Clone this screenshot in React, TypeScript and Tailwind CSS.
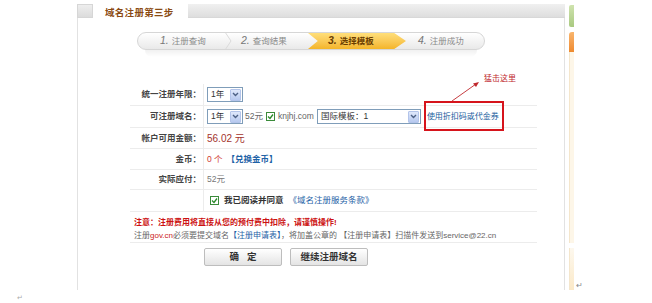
import React from 'react';

const FONT = "font-['Liberation_Sans','Noto_Sans_CJK_SC',sans-serif]";

function Select({ width, text }: { width: string; text: string }) {
  return (
    <span className={`inline-flex items-center h-[15px] ${width} border border-[#7f9db9] bg-white pl-[3px] pr-[1px]`}>
      <span className="flex-1 text-[8.5px] text-[#333] leading-none">{text}</span>
      <span className="w-[11px] h-[12px] rounded-[1px] bg-gradient-to-b from-[#dfe8fb] to-[#b7c9ef] border border-[#b3c4ea] flex items-center justify-center">
        <svg width="7" height="5" viewBox="0 0 7 5">
          <path d="M1 1 L3.5 3.5 L6 1" fill="none" stroke="#4d6185" strokeWidth="1.4" />
        </svg>
      </span>
    </span>
  );
}

function Check() {
  return (
    <span className="inline-flex items-center justify-center w-[9px] h-[9px] border border-[#3b8b3b] bg-white">
      <svg width="7" height="7" viewBox="0 0 7 7">
        <path d="M1 3.5 L3 5.5 L6 1.5" fill="none" stroke="#2a8a2a" strokeWidth="1.3" />
      </svg>
    </span>
  );
}

function Row({ label, h, children, relative }: { label: string; h: string; children?: React.ReactNode; relative?: boolean }) {
  return (
    <div className={`flex ${h} border-b border-[#ececec] ${relative ? 'relative' : ''}`}>
      <div className="w-[74px] border-r border-[#ececec] flex items-center justify-end pr-[2px] text-[8.5px] font-bold text-[#444]">{label}</div>
      <div className="flex-1 flex items-center pl-[3px] gap-[2px]">{children}</div>
    </div>
  );
}

export default function App() {
  return (
    <div className={`w-[652px] h-[303px] bg-white overflow-hidden ${FONT}`}>
      <div className="flex pt-[4px] h-[290px]">
        <div className="w-[77px] shrink-0" />

        {/* main panel */}
        <div className="w-[488px] flex flex-col">
          <div className="flex h-[14px] items-start">
            <div className="w-[16px] h-[14px] bg-gradient-to-b from-[#eeeeee] to-[#dcdcdc] border border-[#d6d6d6]" />
            <div className="w-[95px] h-[18px] bg-white flex items-center pl-[12px] text-[9.5px] font-bold text-[#8a4a12] tracking-[0.3px]">域名注册第三步</div>
            <div className="flex-1 h-[14px] bg-gradient-to-b from-[#f0f0f0] to-[#dedede] border-b border-[#d8d8d8]" />
          </div>

          <div className="flex-1 border-l border-r border-[#e2e2e2] flex flex-col">
            {/* steps */}
            <div className="ml-[59px] mt-[14px] w-[348px]">
              <div className="h-[18px] rounded-full border border-[#d6d6d6] bg-gradient-to-b from-white to-[#e9e9e9] flex items-center overflow-hidden">
                <div className="w-[86px] flex items-center pl-[22px] text-[8.5px] text-[#8a8a8a]">
                  <span className="italic text-[10.5px] mr-[3px] text-[#777]">1.</span>注册查询
                </div>
                <svg width="8" height="18" viewBox="0 0 8 18" className="shrink-0">
                  <path d="M1 0 L7 9 L1 18" fill="none" stroke="#dadada" strokeWidth="1" />
                </svg>
                <div className="w-[76px] flex items-center pl-[9px] text-[8.5px] text-[#8a8a8a]">
                  <span className="italic text-[10.5px] mr-[3px] text-[#777]">2.</span>查询结果
                </div>
                <div className="w-[98px] h-full bg-gradient-to-b from-[#ffdf7a] to-[#f4b526] [clip-path:polygon(0_0,88%_0,100%_50%,88%_100%,0_100%,10%_50%)] flex items-center pl-[20px] text-[8.5px] font-bold text-[#6b3d00]">
                  <span className="italic text-[10.5px] mr-[3px]">3.</span>选择模板
                </div>
                <div className="flex-1 flex items-center pl-[12px] text-[8.5px] text-[#8a8a8a]">
                  <span className="italic text-[10.5px] mr-[3px] text-[#777]">4.</span>注册成功
                </div>
              </div>
              <div className="mx-[8px] h-[7px] rounded-b-full bg-gradient-to-b from-[#f1f1f1] to-white" />
            </div>

            {/* form table */}
            <div className="relative ml-[52px] mt-[27px] w-[407px]">
              <div className="absolute left-[354px] top-[-11px] text-[8px] text-[#c0282d]">猛击这里</div>
              <svg className="absolute left-[318px] top-[-5px]" width="36" height="26" viewBox="0 0 36 26">
                <line x1="4" y1="22" x2="28" y2="5" stroke="#c0282d" strokeWidth="0.9" />
                <path d="M31 3 L25 4.5 L28 8 Z" fill="#c0282d" />
              </svg>

              <Row label="统一注册年限：" h="h-[22px]">
                <Select width="w-[36px]" text="1年" />
              </Row>
              <Row label="可注册域名：" h="h-[22px]" relative>
                <Select width="w-[36px]" text="1年" />
                <span className="text-[8.5px] text-[#666] mr-[1px]">52元</span>
                <Check />
                <span className="text-[8.5px] text-[#666] ml-[1px]">knjhj.com</span>
                <Select width="w-[104px] ml-[1px]" text="国际模板：1" />
                <span className="ml-[4px] text-[8px] text-[#1a5e9e]">使用折扣码或代金券</span>
                <div className="absolute left-[294px] top-[-5px] w-[80px] h-[30px] border-2 border-[#d6141c]" />
              </Row>
              <Row label="帐户可用金额：" h="h-[21px]">
                <span className="text-[10px] text-[#a3332c]">56.02 元</span>
              </Row>
              <Row label="金币：" h="h-[21px]">
                <span className="text-[8.5px] text-[#d03a30]">0 个</span>
                <span className="ml-[2px] text-[8.5px] font-bold text-[#1e62a6]">【兑换金币】</span>
              </Row>
              <Row label="实际应付：" h="h-[20px]">
                <span className="text-[8.5px] text-[#777]">52元</span>
              </Row>
              <Row label="" h="h-[22px]">
                <span className="ml-[3px] mr-[3px] flex"><Check /></span>
                <span className="text-[8.5px] font-bold text-[#333]">我已阅读并同意</span>
                <span className="ml-[3px] text-[8.5px] text-[#1e62a6]">《域名注册服务条款》</span>
              </Row>

              <div className="h-[31px] border-b border-[#ececec] pl-[4px] pt-[3px] flex flex-col justify-center gap-[2px]">
                <div className="text-[8px] font-bold text-[#cc1111] leading-[11px]">注意：注册费用将直接从您的预付费中扣除，请谨慎操作!</div>
                <div className="text-[8px] text-[#666] leading-[11px]">
                  注册<span className="text-[#cc2222]">gov.cn</span>必须要提交域名<span className="text-[#1e62a6]">【注册申请表】</span>，将加盖公章的 【注册申请表】扫描件发送到service@22.cn
                </div>
              </div>

              <div className="flex gap-[8px] pl-[74px] pt-[5px]">
                <button className="w-[78px] h-[18px] rounded-[2px] border border-[#bdbdbd] bg-gradient-to-b from-white to-[#e4e4e4] text-[9.5px] font-bold text-[#333] tracking-[8px] pl-[8px]">确定</button>
                <button className="w-[78px] h-[18px] rounded-[2px] border border-[#bdbdbd] bg-gradient-to-b from-white to-[#e4e4e4] text-[9.5px] font-bold text-[#333]">继续注册域名</button>
              </div>
            </div>
          </div>
        </div>

        {/* right side strip */}
        <div className="ml-[4px] w-[5px] flex flex-col">
          <div className="mt-[1px] h-[22px] rounded-l-[2px] bg-gradient-to-b from-[#cfe3ae] to-[#a9c980]" />
          <div className="mt-[5px] h-[20px] rounded-tl-[3px] bg-gradient-to-b from-[#f9b56c] to-[#ee8a2e]" />
          <div className="h-[191px] bg-[#fdf6e8] border-l border-[#f4e6cc]" />
          <div className="mt-[5px] h-[42px] bg-gradient-to-b from-[#fdf8ee] to-[#fbe9c8] border-l border-[#f4e6cc]" />
        </div>
        <div className="flex flex-col justify-end pl-[2px]">
          <span className="text-[8px] text-[#888] leading-none">↵</span>
        </div>
      </div>

      <div className="pl-[17px] pt-[4px] text-[7px] text-[#aaa] leading-none">↵</div>
    </div>
  );
}
